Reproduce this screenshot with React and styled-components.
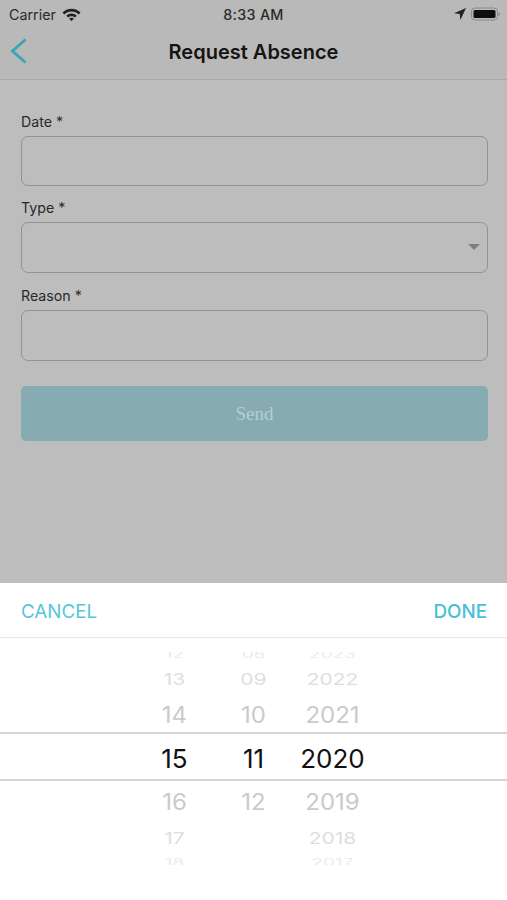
import React from "react";
import styled, { createGlobalStyle } from "styled-components";

const WHEEL_ROWS = [
  { cells: ["12", "08", "2023"], height: 10, size: 19, squash: 0.55, shift: -3, color: "#ececec" },
  { cells: ["13", "09", "2022"], height: 35, size: 21, squash: 0.78, shift: 0, color: "#dedede" },
  { cells: ["14", "10", "2021"], height: 35, size: 24, squash: 0.93, shift: 0.5, color: "#cacaca" },
  { cells: ["15", "11", "2020"], height: 49, size: 26, squash: 1, shift: 2, color: "#111111", selected: true },
  { cells: ["16", "12", "2019"], height: 42, size: 24, squash: 0.93, shift: 0, color: "#cacaca" },
  { cells: ["17", "", "2018"], height: 30, size: 21, squash: 0.78, shift: 0, color: "#dedede" },
  { cells: ["18", "", "2017"], height: 12, size: 19, squash: 0.55, shift: 3, color: "#ececec" },
];

const GlobalStyle = createGlobalStyle`
  html,
  body {
    margin: 0;
    padding: 0;
    background: #bcbcbc;
  }
`;

const Screen = styled.div`
  display: flex;
  flex-direction: column;
  width: 507px;
  height: 900px;
  overflow: hidden;
  background: #bdbdbd;
  font-family: Inter, "Liberation Sans", sans-serif;
`;

const TopBar = styled.header`
  background: #b9b9b9;
  border-bottom: 1px solid #a9a9a9;
  height: 79px;
  flex-shrink: 0;
`;

const StatusBar = styled.div`
  display: grid;
  grid-template-columns: 1fr auto 1fr;
  align-items: center;
  height: 28px;
  padding: 0 7px;
  color: #2b2b2b;
  font-size: 14.3px;
`;

const StatusLeft = styled.div`
  display: flex;
  align-items: center;
  gap: 6px;
  padding-left: 2px;
`;

const StatusRight = styled.div`
  display: flex;
  align-items: center;
  justify-content: flex-end;
  gap: 2px;
`;

const Clock = styled.span`
  font-weight: 500;
  letter-spacing: 0.3px;
`;

const NavBar = styled.div`
  display: grid;
  grid-template-columns: 1fr auto 1fr;
  align-items: center;
  height: 48px;
  padding: 0 10px;
`;

const Title = styled.h1`
  margin: 0;
  color: #141414;
  font-size: 20px;
  font-weight: 600;
`;

const BackButton = styled.div`
  display: flex;
  align-items: center;
`;

const Form = styled.form`
  flex: 1;
  display: flex;
  flex-direction: column;
  padding: 33px 19px 0 21px;
`;

const Field = styled.div`
  display: flex;
  flex-direction: column;
  margin-bottom: ${(p) => p.$gap}px;
`;

const Label = styled.label`
  height: 18px;
  margin-bottom: 5px;
  color: #2a2a2a;
  font-size: 14.2px;
  line-height: 18px;
`;

const Input = styled.div`
  position: relative;
  box-sizing: border-box;
  height: ${(p) => p.$height}px;
  border: 1.5px solid #939393;
  border-radius: 7px;
`;

const Caret = styled.span`
  position: absolute;
  right: 7px;
  top: 21px;
  border-left: 6px solid transparent;
  border-right: 6px solid transparent;
  border-top: 6px solid #7d7d7d;
`;

const SendButton = styled.div`
  display: flex;
  align-items: center;
  justify-content: center;
  height: 55px;
  margin-top: 2px;
  border-radius: 5px;
  background: #86abb0;
  color: #b4cfd3;
  font-family: "Liberation Serif", serif;
  font-size: 19px;
`;

const Sheet = styled.section`
  flex-shrink: 0;
  height: 317px;
  background: #ffffff;
`;

const SheetBar = styled.div`
  display: flex;
  align-items: center;
  justify-content: space-between;
  box-sizing: border-box;
  height: 55px;
  padding: 3px 20px 0 21px;
  border-bottom: 1px solid #e8e8e8;
`;

const SheetAction = styled.span`
  color: ${(p) => (p.$strong ? "#45c0da" : "#58c5dc")};
  font-size: 18.8px;
  font-weight: ${(p) => (p.$strong ? 500 : 400)};
`;

const Wheel = styled.div`
  display: flex;
  flex-direction: column;
  padding-top: 14px;
`;

const WheelRow = styled.div`
  display: flex;
  justify-content: center;
  align-items: center;
  flex-shrink: 0;
  box-sizing: border-box;
  height: ${(p) => p.$height}px;
  overflow: hidden;
  color: ${(p) => p.$color};
  font-size: ${(p) => p.$size}px;
  ${(p) =>
    p.$selected &&
    "border-top: 2px solid #d4d4d4; border-bottom: 2px solid #d4d4d4;"}
`;

const WheelCell = styled.span`
  width: 79px;
  text-align: center;
  transform: translateY(${(p) => p.$shift}px) scaleY(${(p) => p.$squash});
`;

const WifiIcon = () => (
  <svg width="19" height="15" viewBox="0 0 20 15" fill="#222">
    <path d="M10 1.500C6.300 1.500 2.900 3 .5 5.400l1.900 2C4.300 5.400 7 4.300 10 4.300s5.700 1.100 7.600 3.100l1.900-2C17.100 3 13.700 1.500 10 1.500z" />
    <path d="M10 6.500c-2.100 0-4 .8-5.500 2.200l1.900 2c.9-.9 2.200-1.400 3.600-1.400s2.700.5 3.600 1.400l1.900-2C14 7.300 12.100 6.500 10 6.500z" />
    <path d="M10 10.800c-1 0-1.900.4-2.500 1L10 14.500l2.500-2.700c-.6-.6-1.500-1-2.500-1z" />
  </svg>
);

const LocationIcon = () => (
  <svg width="14" height="14" viewBox="0 0 14 14" fill="#222">
    <path d="M13 1 1 6.300l5.700.6.700 6z" />
  </svg>
);

const BatteryIcon = () => (
  <svg width="31" height="14" viewBox="0 0 31 14">
    <rect x="2.500" y="1" width="26" height="12" rx="3.500" fill="none" stroke="#8a8a8a" />
    <rect x="4.500" y="3" width="22" height="8" rx="1.500" fill="#0d0d0d" />
    <path d="M29.500 5v4c.8-.3 1.400-1.100 1.400-2s-.6-1.700-1.400-2z" fill="#8a8a8a" />
  </svg>
);

const BackIcon = () => (
  <svg width="18" height="28" viewBox="0 0 18 28" fill="none">
    <path d="M15.500 1.500 2.500 13l13 11.500" stroke="#36a5b5" strokeWidth="2.800" />
  </svg>
);

const App = () => (
  <>
    <GlobalStyle />
    <Screen>
      <TopBar>
        <StatusBar>
          <StatusLeft>
            <span>Carrier</span>
            <WifiIcon />
          </StatusLeft>
          <Clock>8:33 AM</Clock>
          <StatusRight>
            <LocationIcon />
            <BatteryIcon />
          </StatusRight>
        </StatusBar>
        <NavBar>
          <BackButton>
            <BackIcon />
          </BackButton>
          <Title>Request Absence</Title>
        </NavBar>
      </TopBar>
      <Form>
        <Field $gap={13}>
          <Label>Date *</Label>
          <Input $height={50} />
        </Field>
        <Field $gap={14}>
          <Label>Type *</Label>
          <Input $height={51}>
            <Caret />
          </Input>
        </Field>
        <Field $gap={23}>
          <Label>Reason *</Label>
          <Input $height={51} />
        </Field>
        <SendButton>Send</SendButton>
      </Form>
      <Sheet>
        <SheetBar>
          <SheetAction>CANCEL</SheetAction>
          <SheetAction $strong>DONE</SheetAction>
        </SheetBar>
        <Wheel>
          {WHEEL_ROWS.map((row) => (
            <WheelRow
              key={row.cells[2]}
              $height={row.height}
              $size={row.size}
              $color={row.color}
              $selected={row.selected}
            >
              {row.cells.map((cell, i) => (
                <WheelCell key={i} $squash={row.squash} $shift={row.shift}>
                  {cell}
                </WheelCell>
              ))}
            </WheelRow>
          ))}
        </Wheel>
      </Sheet>
    </Screen>
  </>
);

export default App;
